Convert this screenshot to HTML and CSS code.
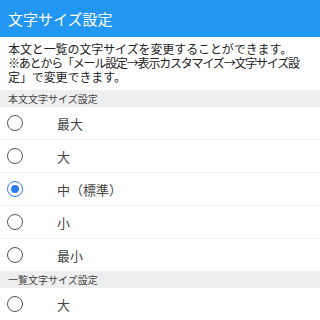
FILE: index.html
```html
<!DOCTYPE html>
<html lang="ja">
<head>
<meta charset="utf-8">
<link rel="stylesheet" href="styles.css">
</head>
<body>
<header class="bar">文字サイズ設定</header>
<p class="desc"><span class="line">本文と一覧の文字サイズを変更することができます。</span><span class="line l2">※あとから「メール設定→表示カスタマイズ→文字サイズ設</span><span class="line">定」で変更できます。</span></p>
<div class="section">本文文字サイズ設定</div>
<ul class="list">
  <li class="row"><span class="radio"></span><span class="label">最大</span></li>
  <li class="row"><span class="radio"></span><span class="label">大</span></li>
  <li class="row"><span class="radio on"></span><span class="label">中（標準）</span></li>
  <li class="row"><span class="radio"></span><span class="label">小</span></li>
  <li class="row"><span class="radio"></span><span class="label">最小</span></li>
</ul>
<div class="section">一覧文字サイズ設定</div>
<ul class="list">
  <li class="row"><span class="radio"></span><span class="label">大</span></li>
</ul>
</body>
</html>
```
FILE: styles.css
```css
html, body { margin: 0; padding: 0; }
body {
  width: 320px;
  height: 320px;
  overflow: hidden;
  background: #fff;
  font-family: "Noto Sans CJK JP", "Noto Sans", sans-serif;
  color: #333;
}
.bar {
  height: 37px;
  background: #2196f3;
  color: #fff;
  font-size: 15px;
  line-height: 37px;
  padding-left: 8px;
}
.desc {
  margin: 0;
  padding: 5px 8px 6px 8px;
  font-size: 12px;
  line-height: 14px;
  color: #222;
}
.line {
  display: block;
  white-space: nowrap;
  letter-spacing: -0.1px;
}
.line.l2 { letter-spacing: -1.2px; }
.section {
  background: #eeeeee;
  font-size: 10px;
  line-height: 17px;
  height: 17px;
  padding-left: 8px;
  color: #444;
}
.list { list-style: none; margin: 0; padding: 0; }
.row {
  display: flex;
  align-items: center;
  height: 32px;
  border-bottom: 1px solid #f0f0f0;
}
.row:last-child { border-bottom: none; }
.radio {
  box-sizing: border-box;
  width: 16px;
  height: 16px;
  border: 1.7px solid #555;
  border-radius: 50%;
  margin-left: 7px;
  position: relative;
}
.radio.on { border-color: #2f7df6; }
.radio.on::after {
  content: "";
  position: absolute;
  left: 2.5px; top: 2.5px;
  width: 8px; height: 8px;
  border-radius: 50%;
  background: #2f7df6;
}
.label {
  margin-left: 34px;
  font-size: 13px;
  color: #444;
}
```
